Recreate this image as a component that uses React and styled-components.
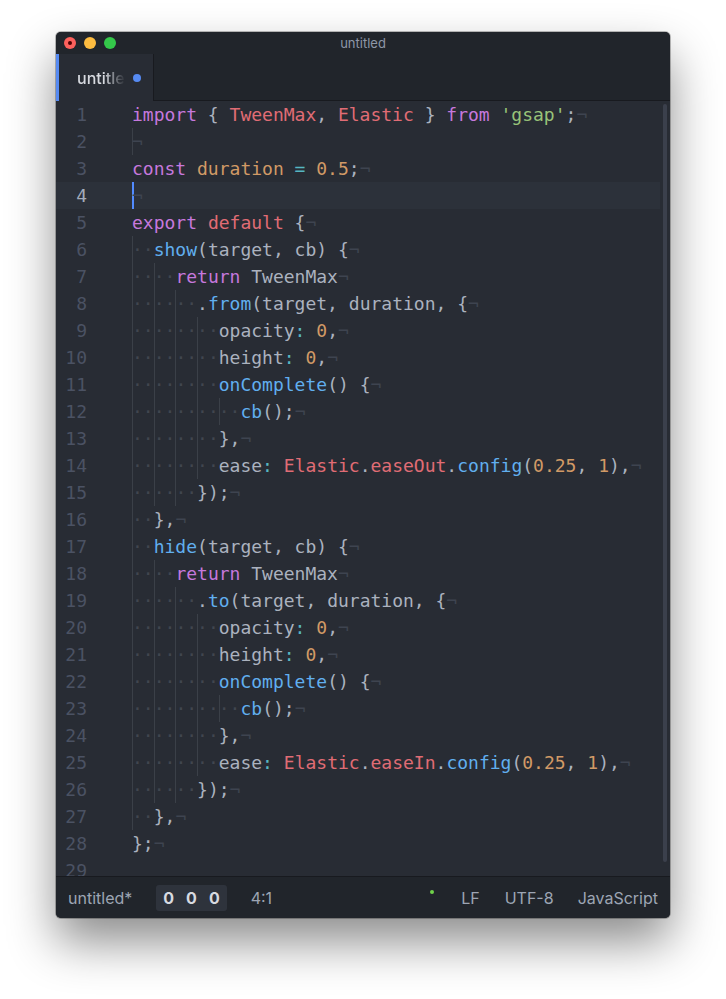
import React from 'react'
import styled, { createGlobalStyle } from 'styled-components'

const GlobalStyle = createGlobalStyle`
  html, body {
    margin: 0;
    background: #ffffff;
  }
`

const tokenColors = {
  k: '#c678dd',
  r: '#e06c75',
  s: '#98c379',
  n: '#d19a66',
  f: '#61afef',
  o: '#56b6c2',
  p: '#abb2bf',
}

// [indent, tokens, flags]
const L = (indent, tokens, flags = {}) => ({ indent, tokens, ...flags })

const lines = [
  L(0, [['k', 'import'], ['p', ' { '], ['r', 'TweenMax'], ['p', ', '], ['r', 'Elastic'], ['p', ' } '], ['k', 'from'], ['p', ' '], ['s', "'gsap'"], ['p', ';']]),
  L(0, [], { guide: true }),
  L(0, [['k', 'const'], ['p', ' '], ['n', 'duration'], ['p', ' '], ['o', '='], ['p', ' '], ['n', '0.5'], ['p', ';']]),
  L(0, [], { guide: true, cursor: true, active: true }),
  L(0, [['k', 'export'], ['p', ' '], ['r', 'default'], ['p', ' {']]),
  L(2, [['f', 'show'], ['p', '(target, cb) {']]),
  L(4, [['k', 'return'], ['p', ' TweenMax']]),
  L(6, [['p', '.'], ['f', 'from'], ['p', '(target, duration, {']]),
  L(8, [['p', 'opacity'], ['o', ':'], ['p', ' '], ['n', '0'], ['p', ',']]),
  L(8, [['p', 'height'], ['o', ':'], ['p', ' '], ['n', '0'], ['p', ',']]),
  L(8, [['f', 'onComplete'], ['p', '() {']]),
  L(10, [['f', 'cb'], ['p', '();']]),
  L(8, [['p', '},']]),
  L(8, [['p', 'ease'], ['o', ':'], ['p', ' '], ['r', 'Elastic'], ['p', '.'], ['r', 'easeOut'], ['p', '.'], ['f', 'config'], ['p', '('], ['n', '0.25'], ['p', ', '], ['n', '1'], ['p', '),']]),
  L(6, [['p', '});']]),
  L(2, [['p', '},']]),
  L(2, [['f', 'hide'], ['p', '(target, cb) {']]),
  L(4, [['k', 'return'], ['p', ' TweenMax']]),
  L(6, [['p', '.'], ['f', 'to'], ['p', '(target, duration, {']]),
  L(8, [['p', 'opacity'], ['o', ':'], ['p', ' '], ['n', '0'], ['p', ',']]),
  L(8, [['p', 'height'], ['o', ':'], ['p', ' '], ['n', '0'], ['p', ',']]),
  L(8, [['f', 'onComplete'], ['p', '() {']]),
  L(10, [['f', 'cb'], ['p', '();']]),
  L(8, [['p', '},']]),
  L(8, [['p', 'ease'], ['o', ':'], ['p', ' '], ['r', 'Elastic'], ['p', '.'], ['r', 'easeIn'], ['p', '.'], ['f', 'config'], ['p', '('], ['n', '0.25'], ['p', ', '], ['n', '1'], ['p', '),']]),
  L(6, [['p', '});']]),
  L(2, [['p', '},']]),
  L(0, [['p', '};']]),
  L(0, [], { noEol: true }),
]

const App = () => {
  return (
    <>
      <GlobalStyle />
      <Page>
        <Window>
          <TitleBar>
            <Lights>
              <Light $color="#fc605c"><CloseDot /></Light>
              <Light $color="#fdbc40" />
              <Light $color="#34c84a" />
            </Lights>
            <Title>untitled</Title>
            <span />
          </TitleBar>
          <TabBar>
            <Tab>
              <TabName>untitled</TabName>
              <ModifiedDot />
            </Tab>
            <TabFiller />
          </TabBar>
          <Editor>
            <Lines>
              {lines.map((line, i) => (
                <Row key={i} $active={line.active}>
                  <LineNumber $active={line.active}>{i + 1}</LineNumber>
                  <Code>
                    {line.guide && <Guide $empty />}
                    {Array.from({ length: line.indent / 2 }).map((_, g) => (
                      <Guide key={g}>··</Guide>
                    ))}
                    {line.cursor && <Cursor />}
                    {line.tokens.map(([t, text], j) => (
                      <Token key={j} $t={t}>{text}</Token>
                    ))}
                    {!line.noEol && <Invisible>¬</Invisible>}
                  </Code>
                </Row>
              ))}
            </Lines>
            <ScrollLane>
              <ScrollThumb />
            </ScrollLane>
          </Editor>
          <StatusBar>
            <StatusLeft>
              <StatusText>untitled*</StatusText>
              <Badge>
                <b>0</b><b>0</b><b>0</b>
              </Badge>
              <StatusText>4:1</StatusText>
            </StatusLeft>
            <StatusRight>
              <GitDot />
              <StatusText $gap={27}>LF</StatusText>
              <StatusText $gap={25}>UTF-8</StatusText>
              <StatusText $gap={24}>JavaScript</StatusText>
            </StatusRight>
          </StatusBar>
        </Window>
      </Page>
    </>
  )
}

export default App

const uiFont = `Inter, "Open Sans", "DejaVu Sans", sans-serif`
const monoFont = `"DejaVu Sans Mono", "Liberation Mono", monospace`

const Page = styled.div`
  padding: 32px 0 0 56px;
  height: 999px;
  box-sizing: border-box;
`
const Window = styled.div`
  width: 614px;
  height: 886px;
  border-radius: 5px;
  overflow: hidden;
  display: flex;
  flex-direction: column;
  background: #282c34;
  box-shadow: 0 24px 48px rgba(0, 0, 0, 0.45), 0 0 0 1px rgba(0, 0, 0, 0.25);
`
const TitleBar = styled.div`
  height: 22px;
  flex-shrink: 0;
  background: #21252b;
  display: grid;
  grid-template-columns: 1fr auto 1fr;
  align-items: center;
`
const Lights = styled.div`
  display: flex;
  gap: 8px;
  padding-left: 8px;
`
const Light = styled.span`
  width: 12px;
  height: 12px;
  border-radius: 50%;
  background: ${p => p.$color};
  display: flex;
  align-items: center;
  justify-content: center;
`
const CloseDot = styled.span`
  width: 4px;
  height: 4px;
  border-radius: 50%;
  background: #4c0002;
`
const Title = styled.div`
  font-family: ${uiFont};
  font-size: 13px;
  color: #8e97a7;
`
const TabBar = styled.div`
  height: 47px;
  flex-shrink: 0;
  display: flex;
  background: #21252b;
`
const Tab = styled.div`
  width: 98px;
  box-sizing: border-box;
  background: #282c34;
  border-left: 3px solid #568af2;
  border-right: 1px solid #181a1f;
  display: flex;
  align-items: center;
  padding-left: 18px;
`
const TabName = styled.span`
  font-family: ${uiFont};
  font-size: 16px;
  font-weight: 500;
  color: #d7dae0;
  width: 48px;
  overflow: hidden;
  white-space: nowrap;
  -webkit-mask-image: linear-gradient(to right, #000 55%, transparent 100%);
  mask-image: linear-gradient(to right, #000 55%, transparent 100%);
`
const ModifiedDot = styled.span`
  width: 8px;
  height: 8px;
  border-radius: 50%;
  background: #568af2;
  margin-left: 8px;
`
const TabFiller = styled.div`
  flex: 1;
  border-bottom: 1px solid #181a1f;
`
const Editor = styled.div`
  height: 775px;
  flex-shrink: 0;
  display: flex;
  overflow: hidden;
  background: #282c34;
`
const Lines = styled.div`
  flex: 1;
  font-family: ${monoFont};
  font-size: 18px;
`
const Row = styled.div`
  display: flex;
  height: 27px;
  line-height: 27px;
  background: ${p => (p.$active ? '#2c313a' : 'transparent')};
`
const LineNumber = styled.div`
  width: 76px;
  flex-shrink: 0;
  box-sizing: border-box;
  padding-right: 45px;
  text-align: right;
  color: ${p => (p.$active ? '#a3abba' : '#4b5263')};
`
const Code = styled.div`
  flex: 1;
  white-space: pre;
`
const Guide = styled.span`
  display: inline-block;
  vertical-align: top;
  height: 27px;
  color: #41464f;
  box-shadow: inset 1px 0 0 #3b4048;
  ${p => p.$empty && 'width: 1px; margin-right: -1px;'}
`
const Cursor = styled.span`
  display: inline-block;
  vertical-align: top;
  width: 2px;
  height: 27px;
  margin-right: -2px;
  background: #528bff;
`
const Token = styled.span`
  color: ${p => tokenColors[p.$t]};
`
const Invisible = styled.span`
  color: #3e4450;
`
const ScrollLane = styled.div`
  width: 10px;
  flex-shrink: 0;
  padding: 3px 3px 0;
  box-sizing: border-box;
`
const ScrollThumb = styled.div`
  width: 4px;
  height: 758px;
  border-radius: 2px;
  background: #3b404c;
`
const StatusBar = styled.div`
  height: 42px;
  flex-shrink: 0;
  box-sizing: border-box;
  border-top: 1px solid #181a1f;
  background: #21252b;
  display: flex;
  align-items: center;
  justify-content: space-between;
  padding: 0 12px;
  font-family: ${uiFont};
  font-size: 16px;
`
const StatusLeft = styled.div`
  display: flex;
  align-items: center;
  gap: 24px;
`
const StatusRight = styled.div`
  display: flex;
  align-items: center;
`
const StatusText = styled.span`
  color: #9da5b4;
  margin-left: ${p => (p.$gap ? `${p.$gap}px` : 0)};
`
const Badge = styled.span`
  display: flex;
  gap: 12px;
  align-items: center;
  height: 26px;
  padding: 0 7px;
  border-radius: 3px;
  background: #2e333c;

  b {
    color: #d7dae0;
    font-weight: 700;
  }
`
const GitDot = styled.span`
  width: 4px;
  height: 4px;
  border-radius: 50%;
  background: #6fd24a;
  margin-bottom: 12px;
`
